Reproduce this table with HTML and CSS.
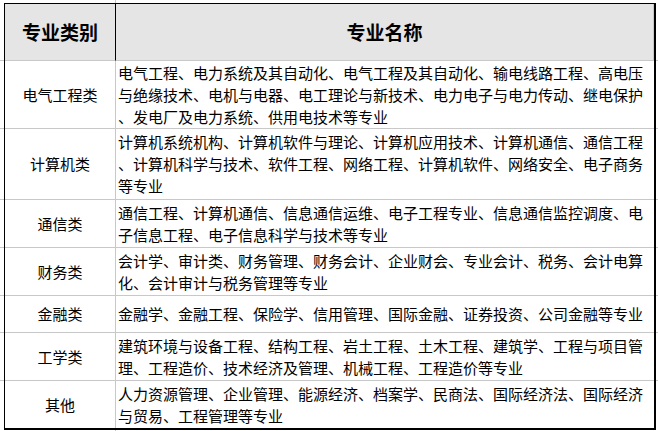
FILE: index.html
```html
<!DOCTYPE html>
<html lang="zh-CN">
<head>
<meta charset="utf-8">
<link rel="stylesheet" href="styles.css">
</head>
<body>
<div class="sheet">
  <div class="cell head head-cat">专业类别</div>
  <div class="cell head head-name">专业名称</div>

  <div class="cell cat">电气工程类</div>
  <div class="cell desc">电气工程、电力系统及其自动化、电气工程及其自动化、输电线路工程、高电压<br>与绝缘技术、电机与电器、电工理论与新技术、电力电子与电力传动、继电保护<br>、发电厂及电力系统、供用电技术等专业</div>

  <div class="cell cat">计算机类</div>
  <div class="cell desc">计算机系统机构、计算机软件与理论、计算机应用技术、计算机通信、通信工程<br>、计算机科学与技术、软件工程、网络工程、计算机软件、网络安全、电子商务<br>等专业</div>

  <div class="cell cat">通信类</div>
  <div class="cell desc">通信工程、计算机通信、信息通信运维、电子工程专业、信息通信监控调度、电<br>子信息工程、电子信息科学与技术等专业</div>

  <div class="cell cat">财务类</div>
  <div class="cell desc">会计学、审计类、财务管理、财务会计、企业财会、专业会计、税务、会计电算<br>化、会计审计与税务管理等专业</div>

  <div class="cell cat">金融类</div>
  <div class="cell desc">金融学、金融工程、保险学、信用管理、国际金融、证券投资、公司金融等专业</div>

  <div class="cell cat">工学类</div>
  <div class="cell desc">建筑环境与设备工程、结构工程、岩土工程、土木工程、建筑学、工程与项目管<br>理、工程造价、技术经济及管理、机械工程、工程造价等专业</div>

  <div class="cell cat last">其他</div>
  <div class="cell desc last">人力资源管理、企业管理、能源经济、档案学、民商法、国际经济法、国际经济<br>与贸易、工程管理等专业</div>
</div>
</body>
</html>
```

FILE: styles.css
```css
html, body {
  margin: 0;
  padding: 0;
}
body {
  width: 658px;
  height: 431px;
  overflow: hidden;
  background-color: #ffffff;
  background-image:
    linear-gradient(to bottom, transparent 60px, #c8c8c8 60px, #c8c8c8 61px, transparent 61px),
    linear-gradient(to bottom, transparent 128px, #c8c8c8 128px, #c8c8c8 129px, transparent 129px),
    linear-gradient(to bottom, transparent 199px, #c8c8c8 199px, #c8c8c8 200px, transparent 200px),
    linear-gradient(to bottom, transparent 247px, #c8c8c8 247px, #c8c8c8 248px, transparent 248px),
    linear-gradient(to bottom, transparent 295px, #c8c8c8 295px, #c8c8c8 296px, transparent 296px),
    linear-gradient(to bottom, transparent 332px, #c8c8c8 332px, #c8c8c8 333px, transparent 333px),
    linear-gradient(to bottom, transparent 380px, #c8c8c8 380px, #c8c8c8 381px, transparent 381px),
    linear-gradient(to right, transparent 115px, #c8c8c8 115px, #c8c8c8 116px, transparent 116px);
  font-family: "Noto Sans CJK SC", "Microsoft YaHei", sans-serif;
  color: #000000;
}
.sheet {
  margin: 3px 0 0 4px;
  width: 649px;
  display: grid;
  grid-template-columns: 111px 538px;
  grid-template-rows: 57px 68px 71px 48px 48px 37px 48px 47px;
  border-left: 1px solid #000;
  border-top: 1px solid #000;
  border-right: 2px solid #000;
  border-bottom: 2px solid #000;
  background: #ffffff;
}
.cell {
  border-right: 1px solid #c8c8c8;
  border-bottom: 1px solid #c8c8c8;
  font-size: 15px;
  line-height: 22px;
  display: flex;
  align-items: center;
  white-space: nowrap;
  overflow: hidden;
}
.cell.desc {
  border-right: none;
  padding-left: 2px;
}
.cell.last {
  border-bottom: none;
}
.cat {
  justify-content: center;
}
.head {
  background: #e5e5e5;
  font-weight: bold;
  font-size: 19px;
  justify-content: center;
}
.head-cat {
  border-right: 1px solid #000;
}
```
